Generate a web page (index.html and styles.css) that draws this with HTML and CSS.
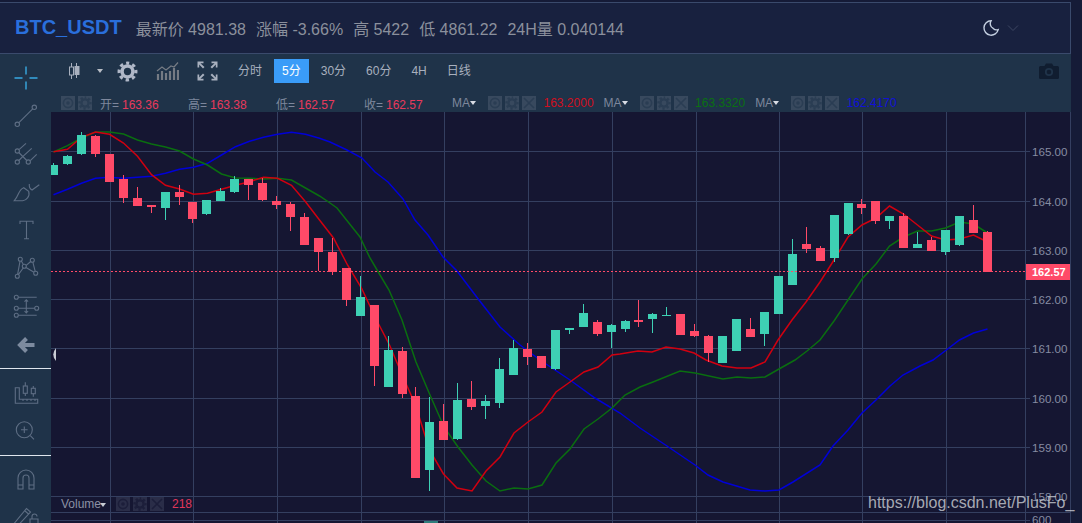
FILE: index.html
```html
<!DOCTYPE html>
<html lang="zh-CN">
<head>
    <meta charset="UTF-8">
    <meta name="viewport" content="width=device-width, initial-scale=1.0">
    <title>BTC_USDT</title>
    <link rel="stylesheet" href="styles.css">
</head>
<body>

    <svg class="defs" width="0" height="0">
        <symbol id="gear" viewBox="0 0 24 24">
            <circle cx="12" cy="12" r="6.2" fill="none" stroke="currentColor" stroke-width="4"/>
            <circle cx="12" cy="12" r="9.6" fill="none" stroke="currentColor" stroke-width="3.6" stroke-dasharray="3.9 3.64" stroke-dashoffset="1.95" transform="rotate(-90 12 12)"/>
        </symbol>
        <symbol id="eye" viewBox="0 0 14 14">
            <circle cx="7" cy="7" r="4.6" fill="none" stroke="currentColor" stroke-width="1.6"/>
            <circle cx="7" cy="7" r="1.8" fill="currentColor"/>
        </symbol>
        <symbol id="close" viewBox="0 0 14 14">
            <path d="M2 2L12 12M12 2L2 12" stroke="currentColor" stroke-width="1.6" fill="none"/>
        </symbol>
    </svg>

    <div class="app">

        <!-- Header -->
        <header class="header">
            <span class="symbol">BTC_USDT</span>
            <span class="stat">最新价 4981.38</span>
            <span class="stat">涨幅 -3.66%</span>
            <span class="stat">高 5422</span>
            <span class="stat">低 4861.22</span>
            <span class="stat">24H量 0.040144</span>
            <svg class="moon" width="18" height="18" viewBox="0 0 18 18">
                <path d="M9 1.8A7.2 7.2 0 1 0 16.2 10.6A5 5 0 0 1 11.2 9.4A5.4 5.4 0 0 1 9 1.8Z" fill="none" stroke="currentColor" stroke-width="1.4"/>
            </svg>
            <svg class="chevron" width="12" height="8" viewBox="0 0 12 8">
                <path d="M1 1.5L6 6.5L11 1.5" fill="none" stroke="currentColor"/>
            </svg>
        </header>

        <div class="main">

            <!-- Left drawing tools -->
            <aside class="sidebar">
                <div class="tool cross">
                    <svg width="30" height="30" viewBox="0 0 30 30"><path d="M3.5 15H11.5M18.5 15H26.5M15 3.5V11.5M15 18.5V26.5"/></svg>
                </div>
                <div class="tool">
                    <svg width="30" height="30" viewBox="0 0 30 30"><circle cx="6.3" cy="23.3" r="2.2"/><circle cx="23.3" cy="6.3" r="2.2"/><path d="M7.9 21.7L21.7 7.9"/></svg>
                </div>
                <div class="tool">
                    <svg width="30" height="30" viewBox="0 0 30 30"><circle cx="6.3" cy="12" r="2.1"/><circle cx="6.3" cy="23" r="2.1"/><circle cx="17.3" cy="23" r="2.1"/><path d="M8.3 10.3L15 4.3M11.7 17.7L20.7 9.3M19.3 21.7L25.7 15.3M7.8 13.5L15.8 21.5M7.8 21.5L11.7 17.7"/></svg>
                </div>
                <div class="tool">
                    <svg width="30" height="30" viewBox="0 0 30 30"><path d="M3.3 23.7C8.5 18 7 13 12.7 10.7L17.7 14.3C19.3 19.5 15 23.7 11.7 23.7Z"/><path d="M18.3 7C18 10 19 12 21 13L28.3 7.7"/></svg>
                </div>
                <div class="tool">
                    <svg width="30" height="30" viewBox="0 0 30 30"><path d="M9 9V6.3H22V9M15.5 6.3V23.7M13 23.7H18"/></svg>
                </div>
                <div class="tool">
                    <svg width="30" height="30" viewBox="0 0 30 30"><circle cx="9.3" cy="6.3" r="2"/><circle cx="21.3" cy="7.3" r="2"/><circle cx="13.3" cy="13.3" r="2"/><circle cx="6.3" cy="23.3" r="2"/><circle cx="24.7" cy="20.3" r="2"/><path d="M9 8.3L6.6 21.3M10.3 8L12.4 11.5M15.2 12.3L19.7 8.5M21.9 9.3L24.2 18.4M7.4 21.6L12.2 15M15 14.5L23 19.2"/></svg>
                </div>
                <div class="tool">
                    <svg width="30" height="30" viewBox="0 0 30 30"><circle cx="5.3" cy="6.3" r="2"/><circle cx="5.3" cy="17.3" r="2"/><circle cx="25.7" cy="17.3" r="2"/><circle cx="5.3" cy="24.3" r="2"/><path d="M7.3 6.3H25.7M7.3 17.3H23.7M7.3 24.3H25.7M15.3 8.7V22M13.5 10.7L15.3 8.7L17.1 10.7M13.5 20L15.3 22L17.1 20"/></svg>
                </div>
                <div class="tool back">
                    <svg width="30" height="30" viewBox="0 0 30 30"><path d="M23.5 16H9M15.5 9.5L9 16L15.5 22.5"/></svg>
                </div>
                <div class="divider"></div>
                <div class="tool">
                    <svg width="30" height="30" viewBox="0 0 30 30"><path d="M4.3 9.7H8.3V21.3H26.7V25.3H4.3ZM12 21.3V23M16 21.3V23M20 21.3V23M24 21.3V23"/><rect x="12.3" y="8" width="4" height="7.3"/><rect x="20.3" y="10.3" width="4" height="5.4"/><path d="M14.3 4.3V8M14.3 15.3V18M22.3 8V10.3M22.3 15.7V18.7"/></svg>
                </div>
                <div class="tool">
                    <svg width="30" height="30" viewBox="0 0 30 30"><circle cx="13.3" cy="13.7" r="8"/><path d="M19.3 19.7L23 23.4M10 13.7H16.6M13.3 10.4V17"/></svg>
                </div>
                <div class="divider"></div>
                <div class="tool">
                    <svg width="30" height="30" viewBox="0 0 30 30"><path d="M7 24V13a8 8 0 0 1 16 0V24H18V13a3 3 0 0 0 -6 0V24ZM7 20H12M18 20H23"/></svg>
                </div>
                <div class="tool">
                    <svg width="30" height="30" viewBox="0 0 30 30"><path d="M3.5 20L15.5 5.5L19.5 9L7 22.5L3 24ZM13.5 7.5L17.5 11"/><path d="M21 16V13.5a2.5 2.5 0 0 1 5 0M19 16H27V22H19Z"/></svg>
                </div>
            </aside>

            <div class="content">

                <!-- Toolbar -->
                <div class="toolbar">
                    <svg class="tb-candle" width="12" height="16" viewBox="0 0 12 16">
                        <path d="M2.500 0V16" stroke="currentColor"/>
                        <rect x="0.500" y="4" width="4" height="8" fill="#1f3349" stroke="currentColor"/>
                        <path d="M7.500 0V15" stroke="currentColor"/>
                        <rect x="5.500" y="3" width="5" height="9" fill="currentColor"/>
                    </svg>
                    <span class="tb-caret"></span>
                    <svg class="tb-gear" width="21" height="21"><use href="#gear"/></svg>
                    <svg class="tb-chart" width="23" height="19" viewBox="0 0 23 19">
                        <path d="M2 18V12M6 18V9M10 18V11M14 18V9M18 18V6M22 18V8" stroke="currentColor" stroke-width="2.2"/>
                        <path d="M1 9L6 5L10 8L15 4L18 5L22 0.5" fill="none" stroke="currentColor" stroke-width="1.2"/>
                    </svg>
                    <svg class="tb-full" width="21" height="20" viewBox="0 0 21 20">
                        <path d="M0.5 6.5V0.5H6.5V2.2H3.4L7.5 6L6 7.5L2.2 3.5V6.5ZM20.5 6.5V0.5H14.5V2.2H17.6L13.5 6L15 7.5L18.8 3.5V6.5ZM0.5 13.5V19.5H6.5V17.8H3.4L7.5 14L6 12.5L2.2 16.5V13.5ZM20.5 13.5V19.5H14.5V17.8H17.6L13.5 14L15 12.5L18.8 16.5V13.5Z" fill="currentColor"/>
                    </svg>
                    <div class="tabs">
                        <span class="tab">分时</span>
                        <span class="tab active">5分</span>
                        <span class="tab">30分</span>
                        <span class="tab">60分</span>
                        <span class="tab">4H</span>
                        <span class="tab">日线</span>
                    </div>
                    <svg class="tb-camera" width="20" height="16" viewBox="0 0 20 16">
                        <path d="M1.5 3H5.5L7 0.5H13L14.5 3H18.5A1.5 1.5 0 0 1 20 4.5V14.5A1.5 1.5 0 0 1 18.5 16H1.5A1.5 1.5 0 0 1 0 14.5V4.5A1.5 1.5 0 0 1 1.5 3Z" fill="currentColor"/>
                        <circle cx="10" cy="9" r="3.2" fill="none" stroke="#1f3349" stroke-width="1.8"/>
                    </svg>
                </div>

                <!-- Indicator legend -->
                <div class="legend">
                    <span class="btn"><svg width="14" height="14"><use href="#eye"/></svg></span>
                    <span class="btn"><svg width="14" height="14"><use href="#gear"/></svg></span>
                    <span class="ohlc first">开=<b>163.36</b></span>
                    <span class="ohlc">高=<b>163.38</b></span>
                    <span class="ohlc">低=<b>162.57</b></span>
                    <span class="ohlc">收=<b>162.57</b></span>

                    <div class="ma">
                        <span class="ma-name">MA</span>
                        <span class="btn"><svg width="14" height="14"><use href="#eye"/></svg></span>
                        <span class="btn"><svg width="14" height="14"><use href="#gear"/></svg></span>
                        <span class="btn"><svg width="14" height="14"><use href="#close"/></svg></span>
                        <span class="ma-value red">163.2000</span>
                    </div>
                    <div class="ma">
                        <span class="ma-name">MA</span>
                        <span class="btn"><svg width="14" height="14"><use href="#eye"/></svg></span>
                        <span class="btn"><svg width="14" height="14"><use href="#gear"/></svg></span>
                        <span class="btn"><svg width="14" height="14"><use href="#close"/></svg></span>
                        <span class="ma-value green">163.3320</span>
                    </div>
                    <div class="ma">
                        <span class="ma-name">MA</span>
                        <span class="btn"><svg width="14" height="14"><use href="#eye"/></svg></span>
                        <span class="btn"><svg width="14" height="14"><use href="#gear"/></svg></span>
                        <span class="btn"><svg width="14" height="14"><use href="#close"/></svg></span>
                        <span class="ma-value blue">162.4170</span>
                    </div>
                </div>

                <!-- Chart, drawn in page coordinates -->
                <div class="chart">
                    <svg class="plot" width="1020" height="411" viewBox="51 112 1020 411">
                        <path class="grid" d="M51 151.5H1030M51 201.5H1030M51 250.5H1030M51 299.5H1030M51 348.5H1030M51 398.5H1030M51 447.5H1030M51 496.5H1030M51 512.5H1071M51 520.5H1030"/>
                        <path class="grid" d="M110.5 112V523M193.5 112V523M277.5 112V523M361.5 112V523M444.5 112V523M528.5 112V523M612.5 112V523M696.5 112V523M779.5 112V523M862.5 112V523M946.5 112V523M1025.5 112V523M1070.5 112V523"/>

                        <!-- Moving averages -->
                        <polyline class="ma-line ma-blue" points="53.5,194.7 67.5,189.3 81.5,183.3 95.5,178.3 109.5,177.3 123.5,178.3 137.5,177.3 151.5,176.3 165.5,173.3 179.5,169.3 193.5,167.3 207.5,163.3 221.5,155 235.5,146.7 249.5,141.3 263.5,137.3 277.5,134.3 291.5,132.3 305.5,134.3 319.5,138.3 330,142 347,150 362,158 375,172 388,182 403,199 415,220 428,235 443,257 457,271 479,300 500,327 520,345 540,360 570,380 595,398 620,413 640,428 667,446 695,465 708,475 723,482 750,490 765,491 779,490 793,482 820,465 833,446 848,430 862,413 876,400 890,386 903,375 920,366 933,360 945,351 959.5,340 973.5,333 987.5,329"/>
                        <polyline class="ma-line ma-green" points="53.5,152 67.5,145.7 81.5,138 95.5,132 109.5,132 123.5,134 137.5,140 151.5,144 165.5,147 179.5,151 193.5,159 207.5,165 221.5,174 235.5,178 249.5,178.3 263.5,179 277.5,178.3 291.5,180 305.5,188 319.5,196 330,203 337,208 360,237 370,258 380,275 389,290 402,320 416,362 430,395 444,427 458,447 472,465 486,481 500,491 514,488 528,489 542,485 556,463 570,449 584,429 598,419 612,408 620,400 625,395 640,387 653,382 680,371 695,373 723,379 737,377 751,378 765,377 779,369 795,360 807,351 820,340 834,321 848,300 862,279 876,264 889.5,246 903.5,237 917.5,231 931.5,231 945.5,228 959.5,222 973.5,224 987.5,233"/>
                        <polyline class="ma-line ma-red" points="53.5,151.7 67.5,149.3 81.5,137.3 95.5,132 109.5,134.3 123.5,143 137.5,156.3 151.5,174.7 165.5,185.3 179.5,189 193.5,194.3 207.5,193.3 221.5,189.3 235.5,185.3 249.5,181.7 263.5,177.3 277.5,178.3 291.5,185.3 305.5,201.7 319.5,220 333.5,238 347.5,265 361.5,288 375.5,318 389.5,345 403.5,378 415.5,405 429.5,450 443.5,474 457,488 472,491 486,471 500,457 514,433 528,422 542,412 556,392 570,382 584,372 598,367 612,355 620,354 638,351 652,352 666,347 680,349 694,353 706,360 722,366 737,368 751,368 765,362 778,340 792,320 806,302 820,282 834,260 848,237 862,225 876,218 889.5,206 903.5,214 917.5,225 931.5,236 945.5,240 959.5,239 973.5,235 987.5,242"/>

                        <!-- Candles -->
                        <g class="up">
                            <path d="M53.5 163V175M67.5 155V165M81.5 132V155M165.5 192V220M206.5 200V215M220.5 188V201M234.5 176V193M360.5 276V316M388.5 336V387M429.5 397V491M457.5 383V440M485.5 395V419M499.5 358V408M513.5 340V375M555.5 330V370M569.5 328V334M583.5 304V327M611.5 324V348M625.5 320V332M652.5 313V333M666.5 307V316M764.5 312V346M792.5 239V285M834.5 215V262M848.5 203V235M889.5 216V229M917.5 232V248M945.5 230V255M959.5 216V246"/>
                            <rect x="49" y="165" width="9" height="10"/>
                            <rect x="63" y="156" width="9" height="8"/>
                            <rect x="77" y="135" width="9" height="19"/>
                            <rect x="161" y="192" width="9" height="16"/>
                            <rect x="202" y="200" width="9" height="14"/>
                            <rect x="216" y="191" width="9" height="10"/>
                            <rect x="230" y="179" width="9" height="13"/>
                            <rect x="356" y="297" width="9" height="19"/>
                            <rect x="384" y="350" width="9" height="37"/>
                            <rect x="425" y="422" width="9" height="48"/>
                            <rect x="453" y="400" width="9" height="39"/>
                            <rect x="481" y="401" width="9" height="5"/>
                            <rect x="495" y="369" width="9" height="34"/>
                            <rect x="509" y="348" width="9" height="27"/>
                            <rect x="551" y="330" width="9" height="39"/>
                            <rect x="565" y="328" width="9" height="2"/>
                            <rect x="579" y="313" width="9" height="14"/>
                            <rect x="607" y="325" width="9" height="7"/>
                            <rect x="621" y="321" width="9" height="8"/>
                            <rect x="648" y="314" width="9" height="5"/>
                            <rect x="662" y="315" width="9" height="1"/>
                            <rect x="718" y="336" width="9" height="27"/>
                            <rect x="732" y="319" width="9" height="32"/>
                            <rect x="760" y="312" width="9" height="22"/>
                            <rect x="774" y="276" width="9" height="38"/>
                            <rect x="788" y="254" width="9" height="31"/>
                            <rect x="830" y="215" width="9" height="43"/>
                            <rect x="844" y="203" width="9" height="31"/>
                            <rect x="885" y="216" width="9" height="5"/>
                            <rect x="913" y="244" width="9" height="4"/>
                            <rect x="941" y="230" width="9" height="22"/>
                            <rect x="955" y="216" width="9" height="29"/>
                        </g>
                        <g class="down">
                            <path d="M95.5 135V157M123.5 175V203M137.5 187V206M151.5 205V213M179.5 185V205M192.5 219V223M248.5 179V200M262.5 178V201M276.5 196V209M290.5 202V231M304.5 213V217M318.5 238V271M332.5 238V275M346.5 268V306M374.5 305V386M402.5 347V398M415.5 387V396M443.5 404V421M471.5 381V410M527.5 343V365M597.5 320V336M638.5 300V327M694.5 324V337M708.5 335V362M750.5 318V329M806.5 227V253M820.5 246V248M861.5 199V214M875.5 201V224M903.5 213V216M931.5 237V240M973.5 205V220M987.5 231V232"/>
                            <rect x="91" y="136" width="9" height="18"/>
                            <rect x="105" y="154" width="9" height="28"/>
                            <rect x="119" y="179" width="9" height="19"/>
                            <rect x="133" y="198" width="9" height="8"/>
                            <rect x="147" y="205" width="9" height="2"/>
                            <rect x="175" y="192" width="9" height="5"/>
                            <rect x="188" y="202" width="9" height="17"/>
                            <rect x="244" y="179" width="9" height="6"/>
                            <rect x="258" y="183" width="9" height="17"/>
                            <rect x="272" y="201" width="9" height="4"/>
                            <rect x="286" y="204" width="9" height="13"/>
                            <rect x="300" y="217" width="9" height="28"/>
                            <rect x="314" y="238" width="9" height="14"/>
                            <rect x="328" y="252" width="9" height="20"/>
                            <rect x="342" y="268" width="9" height="32"/>
                            <rect x="370" y="305" width="9" height="61"/>
                            <rect x="398" y="351" width="9" height="43"/>
                            <rect x="411" y="396" width="9" height="82"/>
                            <rect x="439" y="421" width="9" height="19"/>
                            <rect x="467" y="399" width="9" height="8"/>
                            <rect x="523" y="349" width="9" height="8"/>
                            <rect x="537" y="356" width="9" height="12"/>
                            <rect x="593" y="322" width="9" height="12"/>
                            <rect x="634" y="320" width="9" height="2"/>
                            <rect x="676" y="314" width="9" height="21"/>
                            <rect x="690" y="331" width="9" height="5"/>
                            <rect x="704" y="336" width="9" height="17"/>
                            <rect x="746" y="329" width="9" height="8"/>
                            <rect x="802" y="244" width="9" height="5"/>
                            <rect x="816" y="248" width="9" height="13"/>
                            <rect x="857" y="204" width="9" height="4"/>
                            <rect x="871" y="201" width="9" height="20"/>
                            <rect x="899" y="216" width="9" height="32"/>
                            <rect x="927" y="240" width="9" height="11"/>
                            <rect x="969" y="220" width="9" height="13"/>
                            <rect x="983" y="232" width="9" height="40"/>
                        </g>

                        <path class="last-line" d="M51 271.5H1026"/>
                        <rect class="vol-bar" x="424" y="521" width="14" height="2"/>
                        <path class="handle" d="M56 348Q50.5 354.500 56 361Z"/>

                        <!-- Price axis -->
                        <g class="axis">
                            <text x="1032" y="155.500">165.00</text>
                            <text x="1032" y="205.500">164.00</text>
                            <text x="1032" y="254.500">163.00</text>
                            <text x="1032" y="303.500">162.00</text>
                            <text x="1032" y="352.500">161.00</text>
                            <text x="1032" y="402.500">160.00</text>
                            <text x="1032" y="451.500">159.00</text>
                            <text x="1032" y="500.500">158.00</text>
                            <text x="1032" y="524">600</text>
                        </g>
                        <rect class="price-tag" x="1026" y="264" width="44" height="16"/>
                        <text class="price-text" x="1032" y="276">162.57</text>
                    </svg>

                    <div class="vol-legend">
                        <span class="vol-name">Volume</span>
                        <span class="btn dark"><svg width="14" height="14"><use href="#eye"/></svg></span>
                        <span class="btn dark"><svg width="14" height="14"><use href="#gear"/></svg></span>
                        <span class="btn dark"><svg width="14" height="14"><use href="#close"/></svg></span>
                        <span class="vol-value">218</span>
                    </div>
                    <div class="watermark">https://blog.csdn.net/PlusFo_</div>
                </div>

            </div>
        </div>
    </div>

</body>
</html>
```

FILE: styles.css
```css
html, body {
    height: 100%;
    overflow: hidden;
}

body {
    margin: 0;
    background-color: #151b37;
    font-family: "Liberation Sans", "Noto Sans CJK SC", sans-serif;
    font-size: 12px;
}

.defs {
    display: block;
    height: 0;
}

.app {
    width: 1071px;
    height: 523px;
    padding-top: 2px;
    box-sizing: border-box;
    display: flex;
    flex-direction: column;
}

/* Header */
.header {
    height: 52px;
    box-sizing: border-box;
    flex: none;
    display: flex;
    align-items: center;
    gap: 10px;
    padding-left: 15px;
    padding-bottom: 1px;
    background-color: #18213f;
    border-top: 1px solid #3a4a6c;
    border-bottom: 1px solid #3a4a6c;
    border-right: 1px solid #3a4a6c;
    color: #8b909c;
    font-size: 16px;
    white-space: nowrap;
}

.symbol {
    color: #2a6fdc;
    font-size: 20px;
    font-weight: bold;
    margin-right: 4px;
}

.moon {
    color: #c3cfe0;
    margin-left: auto;
}

.chevron {
    color: #3c4662;
    margin-left: -3px;
    margin-right: 51px;
}

.main {
    flex: 1;
    min-height: 0;
    display: flex;
}

/* Sidebar */
.sidebar {
    width: 51px;
    flex: none;
    box-sizing: border-box;
    padding-top: 5px;
    background-color: #1f3349;
    overflow: hidden;
}

.tool {
    height: 38px;
    display: flex;
    align-items: center;
    justify-content: center;
}

.tool svg {
    fill: none;
    stroke: #5e6e84;
    stroke-width: 1.1;
}

.cross svg {
    stroke: #38a9e2;
    stroke-width: 1.4;
}

.back svg {
    stroke: #7d8b9f;
    stroke-width: 4;
}

.divider {
    height: 1px;
    margin: 5px 0;
    background-color: #dfe6ee;
}

/* Toolbar */
.content {
    flex: 1;
    min-width: 0;
    display: flex;
    flex-direction: column;
    background-color: #1f3349;
}

.toolbar {
    height: 40px;
    flex: none;
    box-sizing: border-box;
    padding: 5px 12px 11px 18px;
    display: flex;
    align-items: center;
    color: #a8b0be;
}

.tb-caret {
    width: 0;
    height: 0;
    margin-left: 16px;
    border-left: 3.5px solid transparent;
    border-right: 3.5px solid transparent;
    border-top: 4px solid #b8bdc5;
}

.tb-gear {
    margin-left: 14px;
    color: #b0b8c8;
}

.tb-chart {
    margin-left: 18px;
    color: #757b84;
}

.tb-full {
    margin-left: 18px;
}

.tabs {
    margin-left: 12px;
    display: flex;
    gap: 4px;
}

.tab {
    height: 24px;
    line-height: 24px;
    padding: 0 8px;
}

.tab.active {
    background-color: #3a9cf8;
    color: #ffffff;
}

.tb-camera {
    margin-left: auto;
    color: #101d30;
}

/* Legend row */
.legend {
    height: 18px;
    flex: none;
    padding-left: 10px;
    display: flex;
    align-items: center;
    color: #7d879c;
    white-space: nowrap;
}

.btn {
    width: 14px;
    height: 14px;
    margin-right: 3px;
    flex: none;
    background-color: #38495e;
    color: #2a3d53;
}

.btn svg {
    display: block;
}

.btn.dark {
    background-color: #2a2d48;
    color: #1c1e3a;
}

.ohlc {
    width: 88px;
}

.ohlc.first {
    margin-left: 5px;
}

.ohlc b {
    font-weight: normal;
    margin-left: 3px;
    color: #e8395c;
}

.ma {
    display: flex;
    align-items: center;
    margin-right: 10px;
}

.ma-name {
    width: 36px;
    color: #7d879c;
    position: relative;
}

/* small caret after the MA name */
.ma-name::after {
    content: "";
    position: absolute;
    left: 18px;
    top: 5px;
    border-left: 3.5px solid transparent;
    border-right: 3.5px solid transparent;
    border-top: 4px solid #d8dce4;
}

.ma-value {
    margin-left: 4.5px;
}

.red {
    color: #d00f20;
}

.green {
    color: #0a7012;
}

.blue {
    color: #1010d8;
}

/* Chart */
.chart {
    flex: 1;
    min-height: 0;
    position: relative;
    background-color: #151632;
}

.plot {
    display: block;
}

.grid {
    stroke: #343f60;
    fill: none;
    shape-rendering: crispEdges;
}

.ma-line {
    fill: none;
    stroke-width: 1.5;
}

.ma-red {
    stroke: #d00010;
}

.ma-green {
    stroke: #0a6e10;
}

.ma-blue {
    stroke: #0000d8;
}

.up rect,
.down rect,
.up path,
.down path {
    shape-rendering: crispEdges;
}

.up rect {
    fill: #3ed0b4;
}

.up path {
    stroke: #3ed0b4;
}

.down rect {
    fill: #ff4a68;
}

.down path {
    stroke: #ff4a68;
}

.last-line {
    stroke: #ff4a68;
    stroke-dasharray: 2 2;
    shape-rendering: crispEdges;
}

.vol-bar {
    fill: #2f7d7c;
}

.handle {
    fill: #c8ccd4;
}

.axis text {
    fill: #868ca2;
    font-size: 11.6px;
}

.price-tag {
    fill: #ff4a68;
}

.price-text {
    fill: #ffffff;
    font-size: 11px;
    font-weight: bold;
}

.vol-legend {
    position: absolute;
    left: 10px;
    top: 385px;
    display: flex;
    align-items: center;
    color: #8b90a4;
}

.vol-name {
    width: 55px;
    position: relative;
}

.vol-name::after {
    content: "";
    position: absolute;
    left: 39px;
    top: 6px;
    border-left: 3.5px solid transparent;
    border-right: 3.5px solid transparent;
    border-top: 4px solid #c8ccd4;
}

.vol-value {
    margin-left: 5px;
    color: #e0365a;
}

.watermark {
    position: absolute;
    left: 817px;
    top: 382px;
    font-size: 16px;
    line-height: 18px;
    white-space: nowrap;
    color: rgba(205, 208, 214, 0.8);
}
```
